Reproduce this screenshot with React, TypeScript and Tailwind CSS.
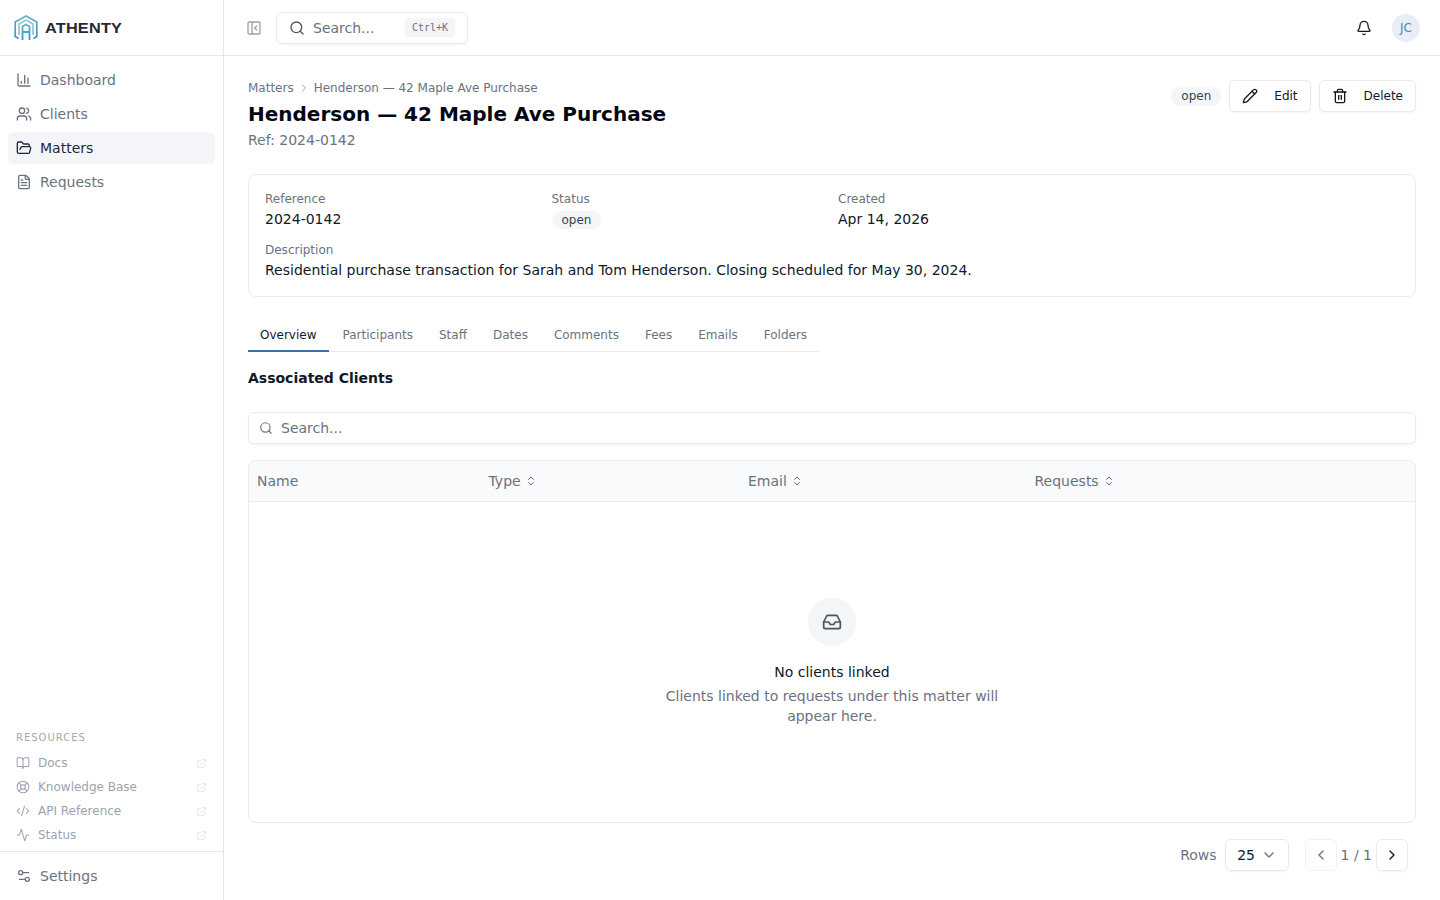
import {
  Activity,
  Bell,
  BookOpen,
  ChartColumn,
  ChevronDown,
  ChevronLeft,
  ChevronRight,
  ChevronsUpDown,
  CodeXml,
  ExternalLink,
  FileText,
  FolderOpen,
  Inbox,
  LifeBuoy,
  PanelLeftClose,
  Pencil,
  Search,
  Settings2,
  Trash2,
  Users,
} from 'lucide-react'

const nav = [
  { label: 'Dashboard', icon: ChartColumn },
  { label: 'Clients', icon: Users },
  { label: 'Matters', icon: FolderOpen, active: true },
  { label: 'Requests', icon: FileText },
]

const resources = [
  { label: 'Docs', icon: BookOpen },
  { label: 'Knowledge Base', icon: LifeBuoy },
  { label: 'API Reference', icon: CodeXml },
  { label: 'Status', icon: Activity },
]

const tabs = ['Overview', 'Participants', 'Staff', 'Dates', 'Comments', 'Fees', 'Emails', 'Folders']

function Logo() {
  return (
    <svg width="24" height="26" viewBox="0 0 24 26" fill="none" strokeLinejoin="round">
      <defs>
        <linearGradient id="logo" x1="0" y1="0" x2="0" y2="1">
          <stop offset="0" stopColor="#62b0c4" />
          <stop offset="1" stopColor="#3d8fc4" />
        </linearGradient>
      </defs>
      <path d="M4.500 23.500 L1.200 21.500 V7 L12 1 L22.800 7 V21.500 L19.500 23.500" stroke="url(#logo)" strokeWidth="1.700" />
      <path d="M5 20 V9 L12 5 L19 9 V20" stroke="url(#logo)" strokeWidth="1.500" opacity="0.7" />
      <path d="M8.500 25 V11.500 L12 9.500 L15.500 11.500 V25 M8.500 17 H15.500" stroke="url(#logo)" strokeWidth="1.800" />
    </svg>
  )
}

function Badge() {
  return <span className="rounded-full bg-[#f3f5f9] px-2.5 py-0.5 text-xs leading-[15px] text-[#374151]">open</span>
}

function Sidebar() {
  return (
    <aside className="flex h-full w-[224px] shrink-0 flex-col border-r border-[#e5e7eb]">
      <div className="flex h-14 shrink-0 items-center gap-[7px] border-b border-[#e5e7eb] pl-3.5">
        <Logo />
        <span className="origin-left font-['Liberation_Sans'] text-[15.500px] font-bold tracking-[0.2px] text-[#27272f] [transform:scaleX(1.05)]">
          ATHENTY
        </span>
      </div>
      <nav className="flex flex-col gap-0.5 p-2">
        {nav.map(item => (
          <a
            key={item.label}
            className={
              item.active
                ? 'flex h-8 items-center gap-2 rounded-md bg-[#f3f5f9] px-2 text-sm text-[#1f2937]'
                : 'flex h-8 items-center gap-2 rounded-md px-2 text-sm text-[#6b7280]'
            }
          >
            <item.icon size={16} strokeWidth={2} />
            {item.label}
          </a>
        ))}
      </nav>
      <div className="mt-auto px-2 pb-1">
        <p className="flex h-6 items-center px-2 text-[10px] tracking-[1px] text-[#a3a8b3]">RESOURCES</p>
        <ul className="mt-0.5">
          {resources.map(item => (
            <li key={item.label} className="flex h-6 items-center gap-2 px-2 text-xs text-[#9ca3af]">
              <item.icon size={14} strokeWidth={1.75} />
              <span>{item.label}</span>
              <ExternalLink size={11} strokeWidth={1.5} className="ml-auto text-[#d9dce2]" />
            </li>
          ))}
        </ul>
      </div>
      <div className="border-t border-[#e5e7eb] px-2">
        <a className="flex h-12 items-center gap-2 px-2 text-sm text-[#6b7280]">
          <Settings2 size={16} strokeWidth={2} />
          Settings
        </a>
      </div>
    </aside>
  )
}

function Topbar() {
  return (
    <header className="flex h-14 shrink-0 items-center border-b border-[#e5e7eb] pl-[22px] pr-5">
      <PanelLeftClose size={16} strokeWidth={2} className="text-[#9ca3af]" />
      <button className="ml-[14px] flex h-8 w-[192px] items-center rounded-md border border-[#e8eaee] bg-white pl-3 pr-3 text-sm text-[#6b7280] shadow-xs">
        <Search size={16} strokeWidth={2} className="text-[#4b5563]" />
        <span className="ml-2">Search...</span>
        <kbd className="ml-auto flex h-[19px] items-center rounded bg-[#f3f5f9] px-[7px] pt-px font-['DejaVu_Sans_Mono'] text-[10px] text-[#6b7280]">Ctrl+K</kbd>
      </button>
      <Bell size={16} strokeWidth={2} className="ml-auto text-[#111827]" />
      <div className="ml-5 flex size-7 items-center justify-center rounded-full bg-[#e8eef7] text-xs text-[#4f83bd]">JC</div>
    </header>
  )
}

function InfoCard() {
  return (
    <section className="mt-6 rounded-lg border border-[#e8eaee] p-4">
      <div className="grid grid-cols-4 gap-3">
        <div>
          <p className="text-xs leading-4 text-[#6b7280]">Reference</p>
          <p className="mt-0.5 text-sm leading-5 text-[#111827]">2024-0142</p>
        </div>
        <div>
          <p className="text-xs leading-4 text-[#6b7280]">Status</p>
          <p className="mt-0.5 leading-5">
            <Badge />
          </p>
        </div>
        <div>
          <p className="text-xs leading-4 text-[#6b7280]">Created</p>
          <p className="mt-0.5 text-sm leading-5 text-[#111827]">Apr 14, 2026</p>
        </div>
      </div>
      <p className="mt-[13px] text-xs leading-4 text-[#6b7280]">Description</p>
      <p className="mt-0.5 text-sm leading-5 text-[#111827]">
        Residential purchase transaction for Sarah and Tom Henderson. Closing scheduled for May 30, 2024.
      </p>
    </section>
  )
}

function SortHead({ label, width }: { label: string; width: string }) {
  return (
    <div className={`flex items-center gap-1 ${width}`}>
      {label}
      <ChevronsUpDown size={12} />
    </div>
  )
}

function ClientsTable() {
  return (
    <div className="mt-4 flex h-[363px] flex-col rounded-lg border border-[#e8eaee]">
      <div className="flex h-[41px] shrink-0 items-center rounded-t-lg border-b border-[#e8eaee] bg-[#f8fafc] px-2 text-sm text-[#6b7280]">
        <div className="w-[231.500px]">Name</div>
        <SortHead label="Type" width="w-[259.500px]" />
        <SortHead label="Email" width="w-[286.500px]" />
        <SortHead label="Requests" width="flex-1" />
      </div>
      <div className="flex flex-1 flex-col items-center justify-center pb-px text-center">
        <div className="flex size-12 items-center justify-center rounded-full bg-[#f3f5f9]">
          <Inbox size={20} strokeWidth={2} className="text-[#4b5563]" />
        </div>
        <p className="mt-4 text-sm leading-5 text-[#111827]">No clients linked</p>
        <p className="mt-1 w-[360px] text-sm leading-5 text-[#6b7280]">
          Clients linked to requests under this matter will appear here.
        </p>
      </div>
    </div>
  )
}

function Pager() {
  return (
    <div className="mt-4 flex items-center justify-end pr-2 text-sm text-[#6b7280]">
      <span>Rows</span>
      <button className="ml-2 flex h-8 w-16 items-center justify-center gap-1.5 rounded-md border border-[#e8eaee] pl-px text-[#111827] shadow-xs">
        25
        <ChevronDown size={16} className="text-[#6b7280]" />
      </button>
      <button className="ml-4 flex size-8 items-center justify-center rounded-md border border-[#f0f1f4] text-[#6b7280]">
        <ChevronLeft size={16} />
      </button>
      <span className="mx-1">1 / 1</span>
      <button className="flex size-8 items-center justify-center rounded-md border border-[#e8eaee] text-[#111827] shadow-xs">
        <ChevronRight size={16} />
      </button>
    </div>
  )
}

export default function App() {
  return (
    <div className="flex h-[900px] overflow-hidden bg-white font-['DejaVu_Sans',sans-serif]">
      <Sidebar />
      <div className="flex min-w-0 flex-1 flex-col">
        <Topbar />
        <main className="flex-1 px-6 pt-6">
          <div className="flex items-start justify-between">
            <div>
              <div className="flex items-center gap-1 text-xs leading-4 text-[#6b7280]">
                <span>Matters</span>
                <ChevronRight size={12} className="text-[#9ca3af]" />
                <span>Henderson — 42 Maple Ave Purchase</span>
              </div>
              <h1 className="mt-1 text-xl leading-7 font-bold text-[#030712]">Henderson — 42 Maple Ave Purchase</h1>
              <p className="mt-0.5 text-sm leading-5 text-[#6b7280]">Ref: 2024-0142</p>
            </div>
            <div className="flex items-center gap-2">
              <Badge />
              <button className="flex h-8 items-center gap-4 rounded-md border border-[#e8eaee] bg-white px-3 text-xs text-[#111827] shadow-xs">
                <Pencil size={16} strokeWidth={2} />
                Edit
              </button>
              <button className="flex h-8 items-center gap-4 rounded-md border border-[#e8eaee] bg-white px-3 text-xs text-[#111827] shadow-xs">
                <Trash2 size={16} strokeWidth={2} />
                Delete
              </button>
            </div>
          </div>
          <InfoCard />
          <div className="mt-5 flex h-[35px] w-fit gap-0.5 border-b border-[#e8eaee] text-xs">
            {tabs.map((tab, i) => (
              <div
                key={tab}
                className={
                  i === 0
                    ? 'flex h-[35px] items-center border-b-2 border-[#3f6f9f] px-3 pt-0.5 text-[#111827]'
                    : 'flex h-[34px] items-center px-3 pt-0.5 text-[#6b7280]'
                }
              >
                {tab}
              </div>
            ))}
          </div>
          <h2 className="mt-4 text-sm leading-5 font-bold text-[#111827]">Associated Clients</h2>
          <div className="mt-[24px] flex h-8 items-center gap-2 rounded-md border border-[#e8eaee] bg-white px-2.5 text-sm text-[#6b7280] shadow-xs">
            <Search size={14} strokeWidth={2} />
            Search...
          </div>
          <ClientsTable />
          <Pager />
        </main>
      </div>
    </div>
  )
}
